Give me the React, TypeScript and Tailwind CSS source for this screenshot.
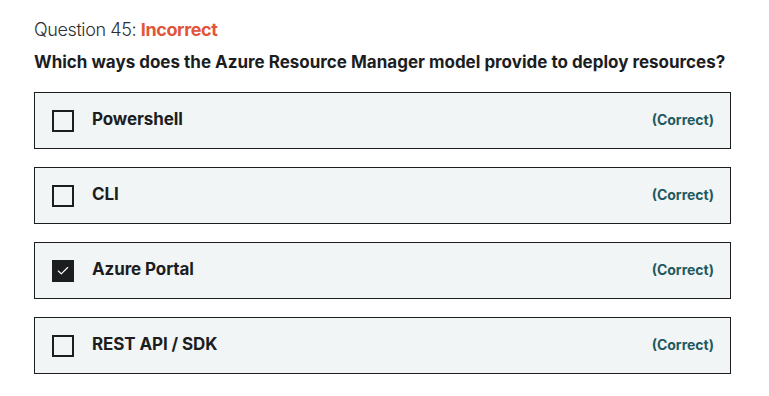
import { Check } from "lucide-react";

const options = [
  { label: "Powershell", checked: false },
  { label: "CLI", checked: false },
  { label: "Azure Portal", checked: true },
  { label: "REST API / SDK", checked: false },
];

export default function App() {
  return (
    <div className="w-[769px] h-[396px] bg-white text-[#1c1d1f] font-['Inter',sans-serif] overflow-hidden">
      <div className="pl-[34px] pr-[38px] pt-[17px]">
        <div className="text-[18px] leading-[26px] text-[#2d2f31] tracking-[-0.4px]">
          <span className="font-light">Question 45:</span>{" "}
          <span className="font-bold text-[#e2553a]">Incorrect</span>
        </div>
        <h2 className="mt-[7px] text-[17px] leading-[24px] font-bold">
          Which ways does the Azure Resource Manager model provide to deploy resources?
        </h2>

        <div className="mt-[18px] flex flex-col gap-[18px]">
          {options.map((o) => (
            <div
              key={o.label}
              className="h-[57px] flex items-center border border-[#1c1d1f] bg-[#f2f5f5] pl-[17px] pr-[16px]"
            >
              {o.checked ? (
                <div className="w-[22px] h-[22px] bg-[#1c1d1f] flex items-center justify-center">
                  <Check className="w-[14px] h-[14px] text-white" strokeWidth={2} />
                </div>
              ) : (
                <div className="w-[22px] h-[22px] border-2 border-[#1c1d1f]" />
              )}
              <span className="ml-[18px] -mt-[2px] text-[17px] font-bold tracking-[-0.1px]">{o.label}</span>
              <span className="ml-auto -mt-[2px] text-[14px] font-bold text-[#1e5a5f]">(Correct)</span>
            </div>
          ))}
        </div>
      </div>
    </div>
  );
}
